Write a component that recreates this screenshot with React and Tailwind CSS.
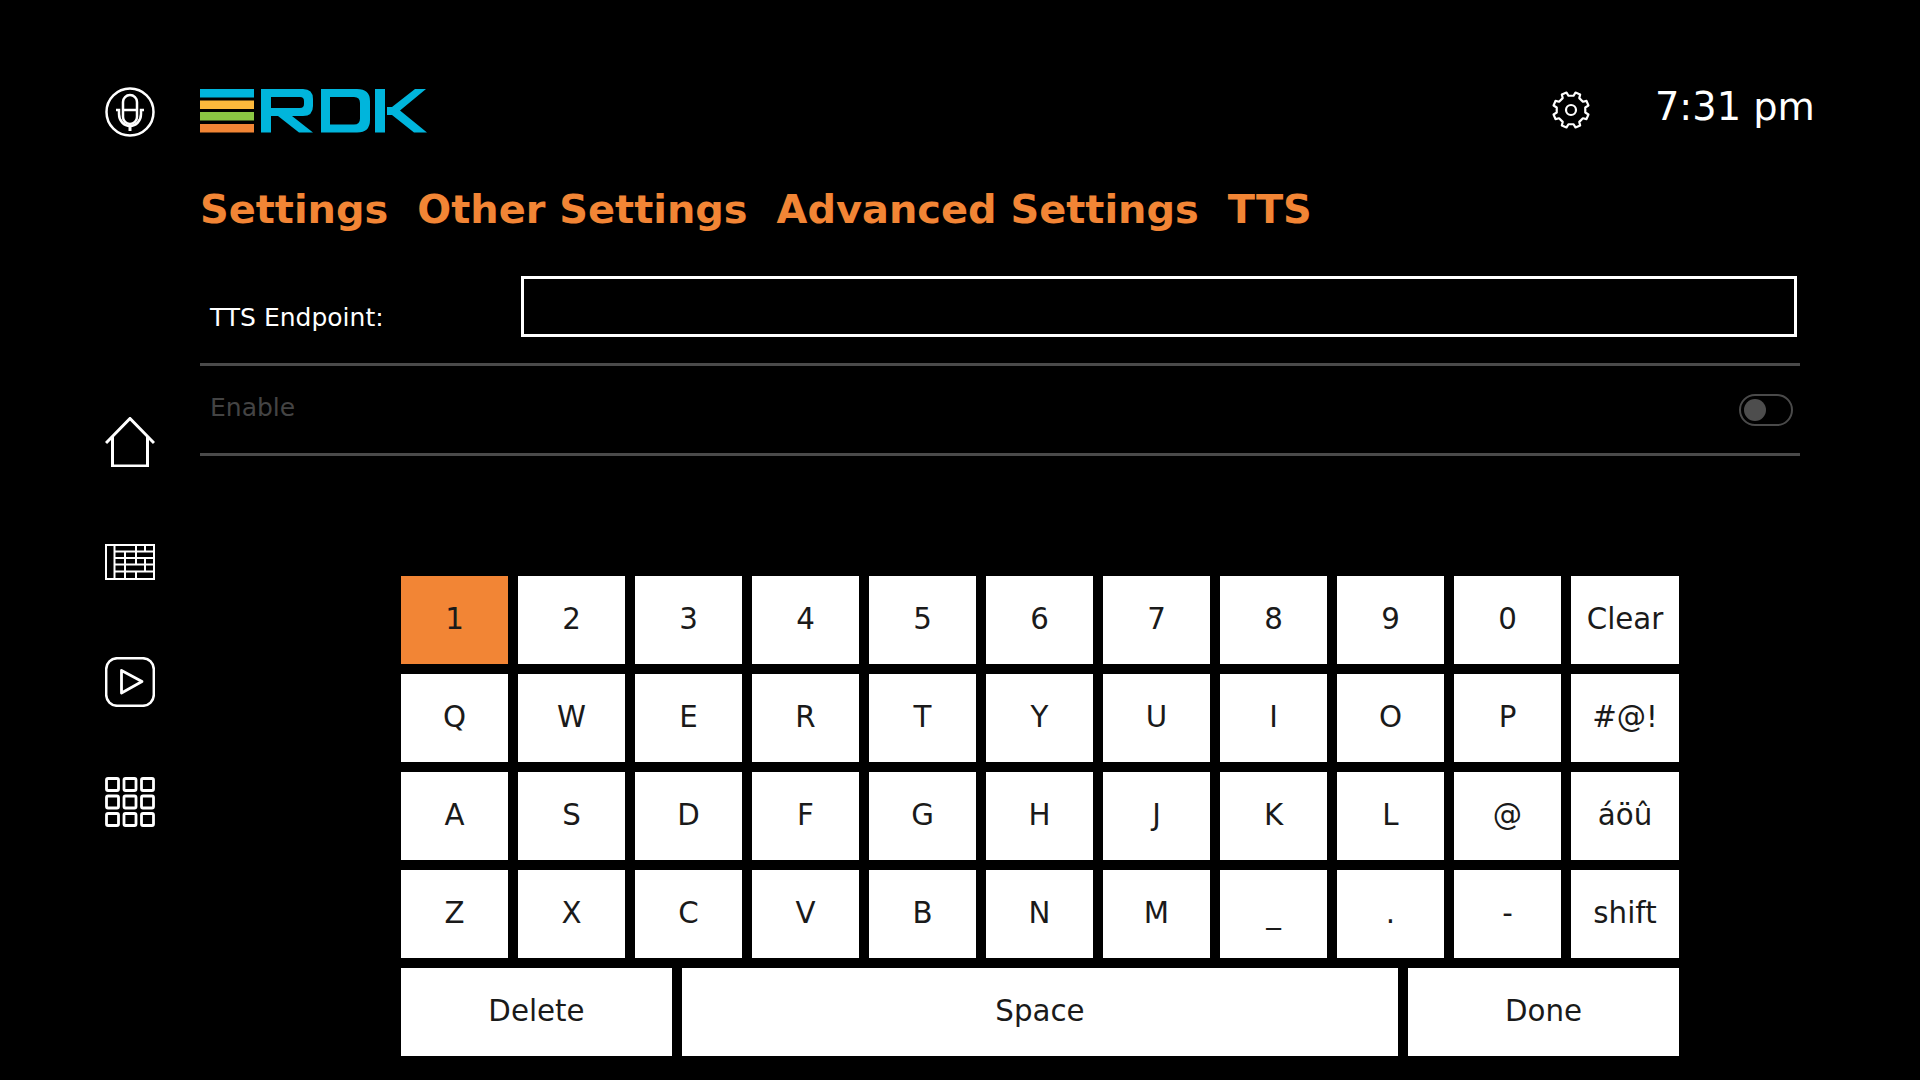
const rows = [
  ['1', '2', '3', '4', '5', '6', '7', '8', '9', '0', 'Clear'],
  ['Q', 'W', 'E', 'R', 'T', 'Y', 'U', 'I', 'O', 'P', '#@!'],
  ['A', 'S', 'D', 'F', 'G', 'H', 'J', 'K', 'L', '@', 'áöû'],
  ['Z', 'X', 'C', 'V', 'B', 'N', 'M', '_', '.', '-', 'shift'],
];

function MicIcon() {
  return (
    <svg width="50" height="50" viewBox="0 0 50 50" fill="none" stroke="#fff" strokeWidth="2.500">
      <circle cx="25" cy="25" r="23.500" />
      <rect x="18" y="8" width="14" height="29" rx="7" />
      <path d="M18 23h14" />
      <path d="M11 23h3v4c0 7 5 12 11 12s11-5 11-12v-4h3" />
      <path d="M25 39v5" strokeWidth="3" />
    </svg>
  );
}

function Logo() {
  return (
    <svg width="227" height="44" viewBox="0 0 227 44">
      <rect x="0" y="0" width="54" height="8.500" fill="#00b5dc" />
      <rect x="0" y="11.500" width="54" height="8.500" fill="#fdb93c" />
      <rect x="0" y="23" width="54" height="8.500" fill="#8bc643" />
      <rect x="0" y="35" width="54" height="8.500" fill="#f28535" />
      <g fill="#00b5dc" fillRule="evenodd">
        <path d="M61 0H103Q113 0 113 10V17Q113 27 103 27H92L113 43.500H99L78 27H71V43.500H61ZM71 8H100Q104 8 104 12V15Q104 19 100 19H71Z" />
        <path d="M121 0H157Q170 0 170 12V31Q170 43.500 157 43.500H121ZM130 8H154Q160 8 160 14V29.500Q160 35.500 154 35.500H130Z" />
        <path d="M175 0H185V43.500H175Z" />
        <path d="M187 18H192L215 0H226L200 21.500L227 43.500H214L192 26H187Z" />
      </g>
    </svg>
  );
}

function GearIcon() {
  const teeth = 8;
  const pts = [];
  for (let i = 0; i < teeth; i++) {
    const a = (i / teeth) * Math.PI * 2 + Math.PI / 8;
    const step = Math.PI / teeth;
    pts.push([a - step * 0.55, 14.500], [a - step * 0.36, 18], [a + step * 0.36, 18], [a + step * 0.55, 14.500]);
  }
  const d = pts
    .map(([a, r], i) => `${i ? 'L' : 'M'}${(19 + r * Math.cos(a)).toFixed(2)} ${(19 + r * Math.sin(a)).toFixed(2)}`)
    .join(' ');
  return (
    <svg width="38" height="38" viewBox="0 0 38 38" fill="none" stroke="#fff" strokeWidth="2.200" strokeLinejoin="round">
      <path d={d + 'Z'} />
      <circle cx="19" cy="19" r="5" />
    </svg>
  );
}

function HomeIcon() {
  return (
    <svg width="50" height="50" viewBox="0 0 50 50" fill="none" stroke="#fff" strokeWidth="3">
      <path d="M1 26L25 1.500l24 24.500" />
      <path d="M7.500 19v30h35V19" />
    </svg>
  );
}

function GuideIcon() {
  return (
    <svg width="50" height="36" viewBox="0 0 50 36" fill="none" stroke="#fff" strokeWidth="2">
      <rect x="1" y="1" width="48" height="34" />
      <path d="M9.500 1v34M9.500 7.500H49M9.500 14H49M9.500 20.500H49M9.500 27.500H49" />
      <path d="M31 1v6.500M40 1v6.500M20 7.500V14M31 7.500V14M20 14v6.500M31 14v6.500M40 14v6.500M20 20.500v7M40 20.500v7M20 27.500V35M31 27.500V35" />
    </svg>
  );
}

function PlayIcon() {
  return (
    <svg width="50" height="50" viewBox="0 0 50 50" fill="none" stroke="#fff" strokeWidth="2.500">
      <rect x="1.200" y="1.200" width="47.600" height="47.600" rx="11" />
      <path d="M16.500 13.500L37 24.500L16.500 36Z" strokeLinejoin="round" strokeWidth="2.800" />
    </svg>
  );
}

function AppsIcon() {
  const spots = [1.500, 19, 36.500];
  return (
    <svg width="50" height="50" viewBox="0 0 50 50" fill="none" stroke="#fff" strokeWidth="2.800">
      {spots.map((y) =>
        spots.map((x) => <rect key={`${x}-${y}`} x={x} y={y} width="12" height="12" rx="1.500" />)
      )}
    </svg>
  );
}

function Key({ label, active, className = 'w-[107px]' }) {
  return (
    <div
      className={`${className} h-[88px] pb-[1px] flex items-center justify-center text-[29.300px] text-[#1a1a1a] ${
        active ? 'bg-[#f28535]' : 'bg-white'
      }`}
    >
      {label}
    </div>
  );
}

export default function App() {
  return (
    <div className="w-[1920px] h-[1080px] bg-black flex overflow-hidden text-white font-['DejaVu_Sans',sans-serif]">
      <aside className="w-[200px] shrink-0 pl-[105px] pt-[87px] flex flex-col">
        <MicIcon />
        <div className="mt-[280px] flex flex-col">
          <HomeIcon />
          <div className="mt-[77px]"><GuideIcon /></div>
          <div className="mt-[77px]"><PlayIcon /></div>
          <div className="mt-[70px]"><AppsIcon /></div>
        </div>
      </aside>

      <main className="w-[1600px] flex flex-col">
        <header className="h-[132px] pt-[89px] flex items-start">
          <Logo />
          <div className="ml-auto mr-[210px] mt-[2px]"><GearIcon /></div>
        </header>
        <div className="absolute top-[80px] left-[1655px] text-[38.300px] leading-[54px]">7:31 pm</div>

        <nav className="flex gap-[29px] text-[39.900px] leading-[46px] font-bold text-[#f28535] mt-[54px] mb-[1px]">
          <span>Settings</span>
          <span>Other Settings</span>
          <span>Advanced Settings</span>
          <span>TTS</span>
        </nav>

        <section className="mt-[43px] h-[90px] flex border-b-[3px] border-[#4a4a4a]">
          <label className="w-[321px] pl-[10px] pt-[25px] text-[25px] leading-[34px]">TTS Endpoint:</label>
          <div className="w-[1276px] h-[61px] border-[3px] border-white" />
        </section>
        <section className="h-[90px] flex items-center justify-between border-b-[3px] border-[#4a4a4a] pl-[10px] pr-[7px] text-[25px] text-[#444]">
          <span className="-mt-[4px]">Enable</span>
          <div className="w-[54px] h-[32px] rounded-full border-[2px] border-[#4a4a4a] flex items-center pl-[3px]">
            <div className="w-[22px] h-[22px] rounded-full bg-[#4d4d4d]" />
          </div>
        </section>

        <div className="ml-[201px] mt-[120px] w-[1278px] flex flex-col gap-[10px]">
          {rows.map((row) => (
            <div key={row[0]} className="flex gap-[10px]">
              {row.map((k) => (
                <Key key={k} label={k} active={k === '1'} className={k === row[10] ? 'flex-1' : undefined} />
              ))}
            </div>
          ))}
          <div className="flex gap-[10px]">
            <Key label="Delete" className="w-[271px]" />
            <Key label="Space" className="flex-1" />
            <Key label="Done" className="w-[271px]" />
          </div>
        </div>
      </main>
    </div>
  );
}
